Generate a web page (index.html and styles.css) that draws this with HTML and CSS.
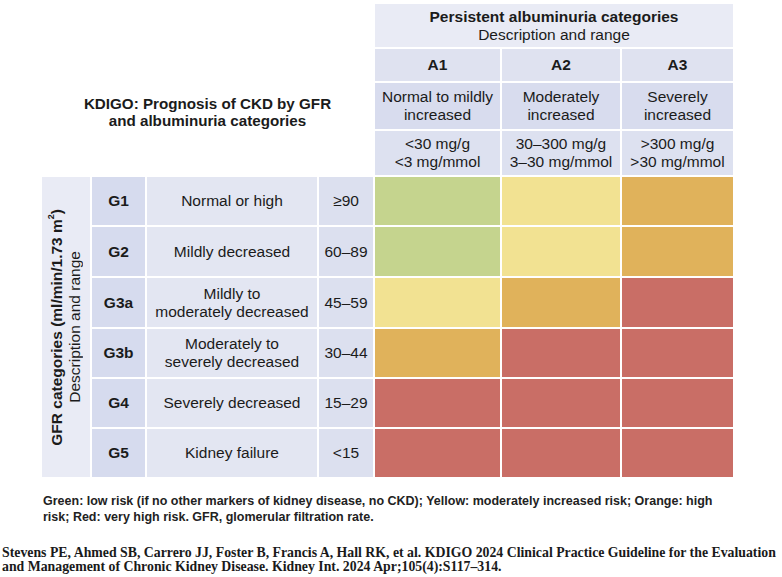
FILE: index.html
```html
<!DOCTYPE html>
<html lang="en">
<head>
<meta charset="utf-8">
<title>KDIGO: Prognosis of CKD by GFR and albuminuria categories</title>
<link rel="stylesheet" href="styles.css">
</head>
<body>
<main class="page">
  <section class="chart">
    <div class="title">KDIGO: Prognosis of CKD by GFR<br>and albuminuria categories</div>
    <div class="cell head-top"><span><b>Persistent albuminuria categories</b><br>Description and range</span></div>
    <div class="cell a-code">A1</div>
    <div class="cell a-code">A2</div>
    <div class="cell a-code">A3</div>
    <div class="cell a-desc">Normal to mildly<br>increased</div>
    <div class="cell a-desc">Moderately<br>increased</div>
    <div class="cell a-desc">Severely<br>increased</div>
    <div class="cell a-range">&lt;30 mg/g<br>&lt;3 mg/mmol</div>
    <div class="cell a-range">30–300 mg/g<br>3–30 mg/mmol</div>
    <div class="cell a-range">&gt;300 mg/g<br>&gt;30 mg/mmol</div>

    <div class="cell side"><span class="side-text"><b>GFR categories (ml/min/1.73 m<sup>2</sup>)</b><br>Description and range</span></div>

    <div class="cell g-code">G1</div>
    <div class="cell g-desc">Normal or high</div>
    <div class="cell g-val">≥90</div>
    <div class="risk green"></div><div class="risk yellow"></div><div class="risk orange"></div>

    <div class="cell g-code">G2</div>
    <div class="cell g-desc">Mildly decreased</div>
    <div class="cell g-val">60–89</div>
    <div class="risk green"></div><div class="risk yellow"></div><div class="risk orange"></div>

    <div class="cell g-code">G3a</div>
    <div class="cell g-desc">Mildly to<br>moderately decreased</div>
    <div class="cell g-val">45–59</div>
    <div class="risk yellow"></div><div class="risk orange"></div><div class="risk red"></div>

    <div class="cell g-code">G3b</div>
    <div class="cell g-desc">Moderately to<br>severely decreased</div>
    <div class="cell g-val">30–44</div>
    <div class="risk orange"></div><div class="risk red"></div><div class="risk red"></div>

    <div class="cell g-code">G4</div>
    <div class="cell g-desc">Severely decreased</div>
    <div class="cell g-val">15–29</div>
    <div class="risk red"></div><div class="risk red"></div><div class="risk red"></div>

    <div class="cell g-code">G5</div>
    <div class="cell g-desc">Kidney failure</div>
    <div class="cell g-val">&lt;15</div>
    <div class="risk red"></div><div class="risk red"></div><div class="risk red"></div>
  </section>
  <p class="note">Green: low risk (if no other markers of kidney disease, no CKD); Yellow: moderately increased risk; Orange: high<br>risk; Red: very high risk. GFR, glomerular filtration rate.</p>
  <p class="cite">Stevens PE, Ahmed SB, Carrero JJ, Foster B, Francis A, Hall RK, et al. KDIGO 2024 Clinical Practice Guideline for the Evaluation<br>and Management of Chronic Kidney Disease. Kidney Int. 2024 Apr;105(4):S117–314.</p>
</main>
</body>
</html>
```

FILE: styles.css
```css
html, body {
  margin: 0;
  padding: 0;
  background: #ffffff;
}

.page {
  padding-top: 4px;
  font-family: "Liberation Sans", Arial, sans-serif;
  color: #1b1b1b;
}

.chart {
  margin-left: 42px;
  display: grid;
  grid-template-columns: 48px 53px 170px 54px 125px 118px 111px;
  grid-template-rows: 43px 32px 46px 44px 48px 49px 49px 48px 48px 48px;
  gap: 2px;
  width: 691px;
}

.title {
  grid-column: 1 / 5;
  grid-row: 1 / 5;
  display: flex;
  align-items: center;
  justify-content: center;
  text-align: center;
  padding-top: 45px;
  font-weight: bold;
  font-size: 15.2px;
  line-height: 17px;
}

.cell {
  display: flex;
  align-items: center;
  justify-content: center;
  text-align: center;
  font-size: 15.5px;
  line-height: 18px;
}

.head-top {
  grid-column: 5 / 8;
  background: #e9ebf5;
  line-height: 18px;
  padding-top: 1px;
}

.a-code {
  background: #dfe2f0;
  font-weight: bold;
}

.a-desc {
  background: #d8dcee;
}

.a-range {
  background: #dde1f0;
}

.side {
  grid-row: span 6;
  background: #e9ebf5;
}

.side-text {
  writing-mode: vertical-rl;
  transform: rotate(180deg);
  line-height: 18px;
}

.side-text sup {
  font-size: 9px;
  line-height: 0;
}

.g-code {
  background: #d6dbee;
  font-weight: bold;
}

.g-desc {
  background: #e3e6f2;
}

.g-val {
  background: #dce0ef;
}

.risk.green { background: #c5d48e; }
.risk.yellow { background: #f2e292; }
.risk.orange { background: #e0b25b; }
.risk.red { background: #c96e66; }

.note {
  margin: 16px 0 0 43px;
  font-size: 12.5px;
  line-height: 16px;
  font-weight: bold;
  color: #222222;
}

.cite {
  margin: 21px 0 0 2px;
  font-family: "Liberation Serif", "Times New Roman", serif;
  font-weight: bold;
  font-size: 13.8px;
  line-height: 14px;
  color: #1a1a1a;
}
```
